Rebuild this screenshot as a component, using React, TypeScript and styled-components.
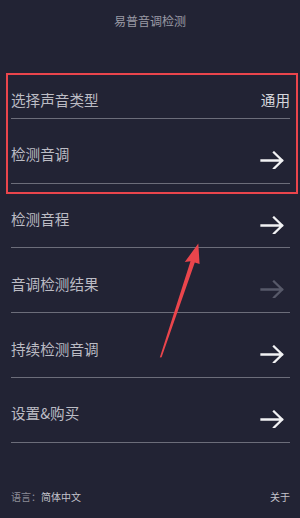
import React from "react";
import styled, { createGlobalStyle } from "styled-components";

const GlobalStyle = createGlobalStyle`
  html, body {
    margin: 0;
    padding: 0;
    background: #222334;
  }
  body {
    font-family: "Noto Sans CJK SC", "Noto Sans", sans-serif;
  }
  * { box-sizing: border-box; }
`;

const Page = styled.div`
  position: relative;
  width: 300px;
  height: 518px;
  overflow: hidden;
  background: #222334;
  display: flex;
  flex-direction: column;
`;

const Header = styled.header`
  height: 54px;
  padding-top: 10px;
  text-align: center;
  font-size: 12px;
  line-height: 21px;
  color: #9a9aa5;
`;

const List = styled.div`
  display: flex;
  flex-direction: column;
  padding: 0 10px 0 11px;
`;

const Row = styled.div<{ $picker?: boolean }>`
  height: 64.75px;
  padding-top: ${(p) => (p.$picker ? "36px" : "25.5px")};
  display: flex;
  align-items: flex-start;
  justify-content: space-between;
  border-bottom: 1px solid #6c6d7a;
`;

const Label = styled.span`
  font-size: 14.6px;
  line-height: 20px;
  color: #bcbcc4;
`;

const Value = styled.span`
  font-size: 14.6px;
  line-height: 20px;
  color: #d6d6dc;
`;

const ArrowIcon = styled.svg<{ $muted?: boolean }>`
  width: 24px;
  height: 18px;
  margin-top: 6.5px;
  margin-right: 6px;
  color: ${(p) => (p.$muted ? "#575969" : "#f2f2f4")};
`;

const Footer = styled.footer`
  margin-top: auto;
  padding: 0 10px 14px 11px;
  display: flex;
  justify-content: space-between;
  font-size: 10px;
  line-height: 14px;
`;

const Muted = styled.span`
  color: #8c8c97;
`;

const Light = styled.span`
  color: #c4c4cc;
`;

const Highlight = styled.div`
  position: absolute;
  left: 6px;
  top: 73px;
  width: 292px;
  height: 121px;
  border: 2.5px solid #ea454c;
  pointer-events: none;
`;

const Annotation = styled.svg`
  position: absolute;
  left: 0;
  top: 0;
  width: 300px;
  height: 518px;
  pointer-events: none;
`;

const Arrow = ({ muted }: { muted?: boolean }) => (
  <ArrowIcon $muted={muted} viewBox="0 0 24 18" fill="none">
    <path
      d="M1.5 9.5 H22 M14 1.5 L22.2 9.5 L14 17.5"
      stroke="currentColor"
      strokeWidth="2.3"
      strokeLinecap="square"
      strokeLinejoin="miter"
    />
  </ArrowIcon>
);

const items: { label: string; muted?: boolean }[] = [
  { label: "检测音调" },
  { label: "检测音程" },
  { label: "音调检测结果", muted: true },
  { label: "持续检测音调" },
  { label: "设置&购买" },
];

export default function App() {
  return (
    <>
      <GlobalStyle />
      <Page>
        <Header>易普音调检测</Header>
        <List>
          <Row $picker>
            <Label>选择声音类型</Label>
            <Value>通用</Value>
          </Row>
          {items.map((it) => (
            <Row key={it.label}>
              <Label>{it.label}</Label>
              <Arrow muted={it.muted} />
            </Row>
          ))}
        </List>
        <Footer>
          <span>
            <Muted>语言：</Muted>
            <Light>简体中文</Light>
          </span>
          <Light>关于</Light>
        </Footer>
        <Highlight />
        <Annotation viewBox="0 0 300 518">
          <polygon
            points="198.3,243.5 184.8,262 190.5,261.3 159.8,357.5 161.6,357.3 194.8,262.6 199.6,264"
            fill="#ea454c"
          />
        </Annotation>
      </Page>
    </>
  );
}
